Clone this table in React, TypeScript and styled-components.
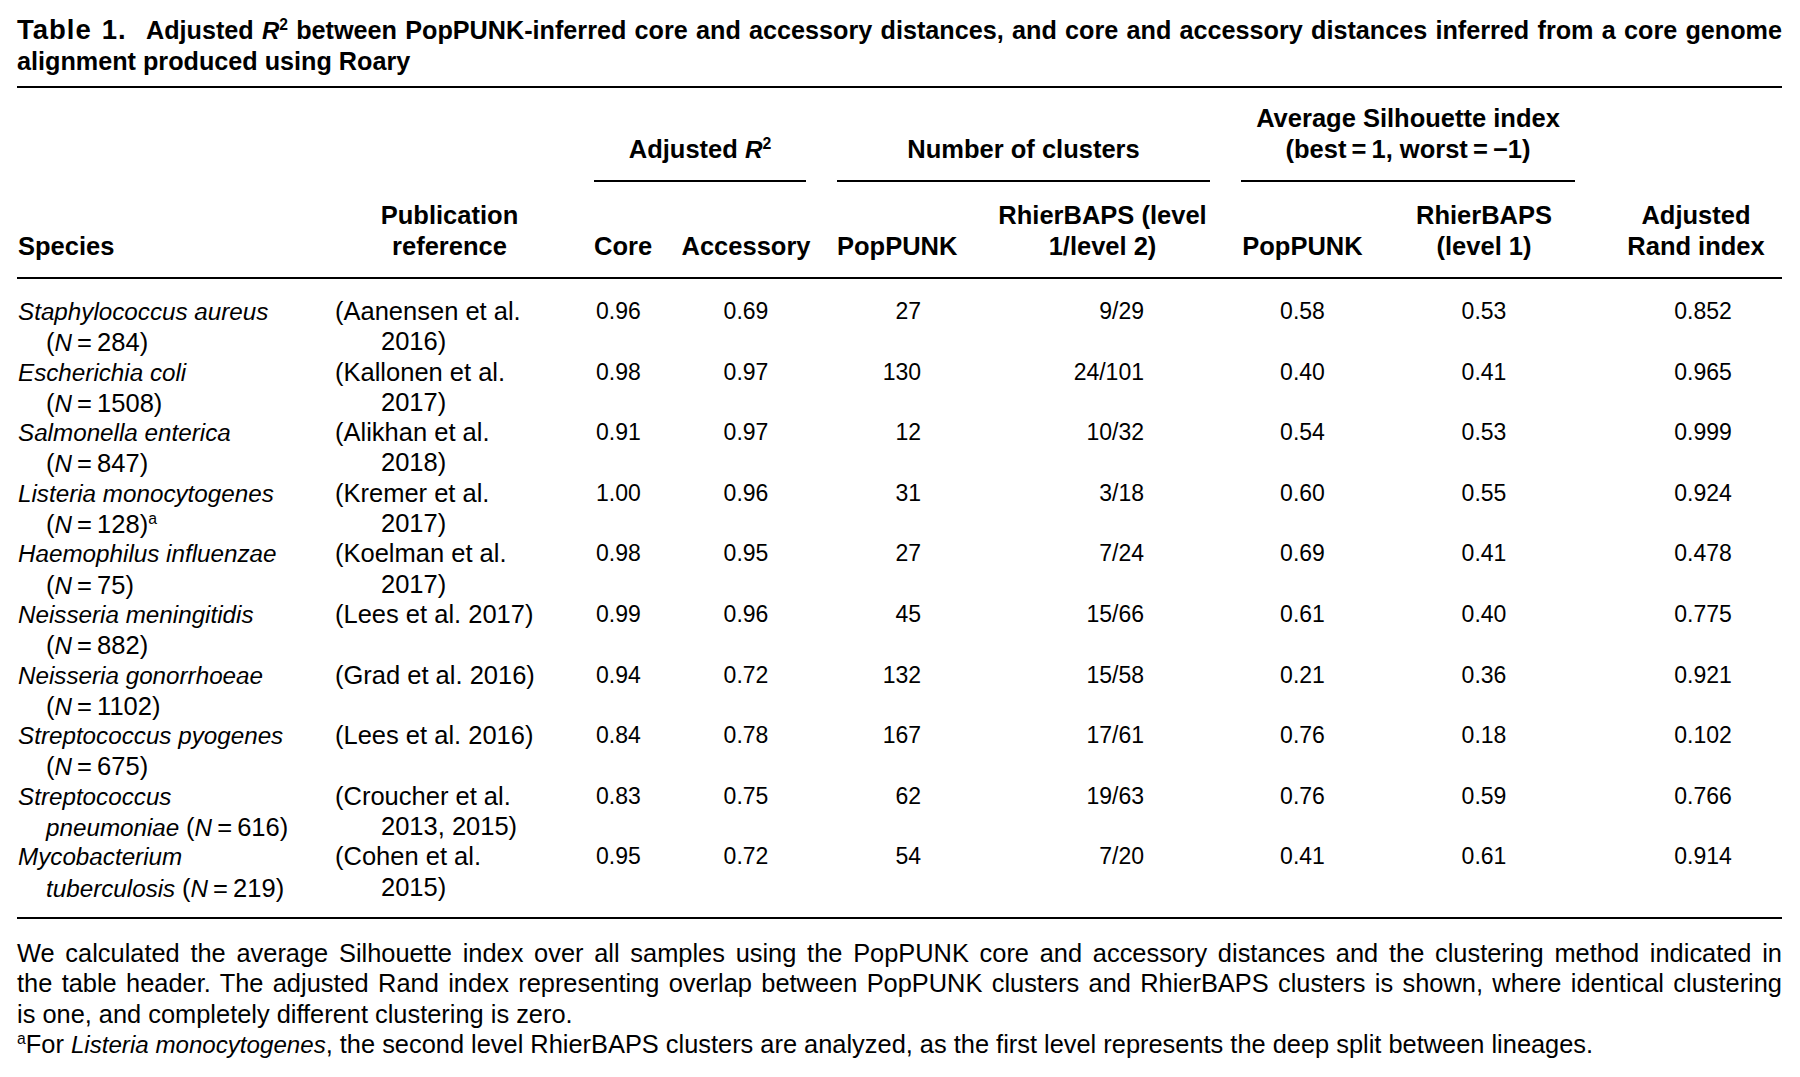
import { FC, ReactNode } from 'react'
import styled, { createGlobalStyle } from 'styled-components'

const FONT = `'Liberation Sans', Arial, sans-serif`
const COLS = '318px 245px 100px 150px 150px 245px 155px 208px 194px'

const GlobalStyle = createGlobalStyle`
  html, body {
    margin: 0;
    padding: 0;
    background: #fff;
  }
  body {
    font-family: ${FONT};
    color: #000;
  }
`

const Page = styled.div`
  width: 1765px;
  padding: 15px 0 0 17px;
`

const Caption = styled.div`
  font-weight: bold;
  font-size: 25.2px;
  line-height: 31px;
  padding-bottom: 9px;
  border-bottom: 2px solid #000;
`

// one forced line of running text, optionally stretched to the full width
const Line = styled.div<{ $justify?: boolean }>`
  white-space: nowrap;
  text-align: ${(p) => (p.$justify ? 'justify' : 'left')};
  text-align-last: ${(p) => (p.$justify ? 'justify' : 'left')};
`

const Label = styled.span`
  font-size: 27.5px;
  line-height: 0;
  letter-spacing: 1px;
  margin-right: 12px;
`

const Head = styled.div`
  display: grid;
  grid-template-columns: ${COLS};
  border-bottom: 2px solid #000;
  font-weight: bold;
  font-size: 25.5px;
  line-height: 31px;
`

type Align = 'left' | 'center' | 'right'

const GroupHead = styled.div<{ $col: string; $ml: number; $mr: number }>`
  grid-row: 1;
  grid-column: ${(p) => p.$col};
  margin: 0 ${(p) => p.$mr}px 0 ${(p) => p.$ml}px;
  padding: 15px 0 15px;
  border-bottom: 2px solid #000;
  text-align: center;
  align-self: end;
  white-space: nowrap;
`

const ColHead = styled.div<{ $col: number; $align: Align; $pl?: number; $pr?: number }>`
  grid-row: 2;
  grid-column: ${(p) => p.$col};
  align-self: end;
  text-align: ${(p) => p.$align};
  padding: 18px ${(p) => p.$pr || 0}px 15px ${(p) => p.$pl || 0}px;
  white-space: nowrap;
`

const Body = styled.div`
  display: grid;
  grid-template-columns: ${COLS};
  padding: 17px 0 15px;
  border-bottom: 2px solid #000;
  font-size: 25.5px;
  line-height: 30.3px;
`

const Cell = styled.div<{ $align: Align; $pl?: number; $pr?: number }>`
  height: 60.6px;
  text-align: ${(p) => p.$align};
  padding: 0 ${(p) => p.$pr || 0}px 0 ${(p) => p.$pl || 0}px;
  white-space: nowrap;
`

const ValueCell = styled(Cell)`
  font-size: 23px;
`

const Indent = styled.div<{ $w: number }>`
  padding-left: ${(p) => p.$w}px;
`

const Notes = styled.div`
  margin-top: 19px;
  font-size: 25.4px;
  line-height: 30.4px;
`

const Sup = styled.sup`
  font-size: 0.62em;
  line-height: 0;
  vertical-align: 0.6em;
`

const I = styled.i`
  font-style: italic;
  font-size: 0.95em;
`

const Eq = '\u2009=\u2009'

const R2: FC = () => (
  <>
    <I>R</I>
    <Sup>2</Sup>
  </>
)

interface Row {
  name: string
  line2?: string
  n: string
  note?: boolean
  ref: string
  ref2?: string
  vals: string[]
}

const ROWS: Row[] = [
  { name: 'Staphylococcus aureus', n: '284', ref: '(Aanensen et al.', ref2: '2016)', vals: ['0.96', '0.69', '27', '9/29', '0.58', '0.53', '0.852'] },
  { name: 'Escherichia coli', n: '1508', ref: '(Kallonen et al.', ref2: '2017)', vals: ['0.98', '0.97', '130', '24/101', '0.40', '0.41', '0.965'] },
  { name: 'Salmonella enterica', n: '847', ref: '(Alikhan et al.', ref2: '2018)', vals: ['0.91', '0.97', '12', '10/32', '0.54', '0.53', '0.999'] },
  { name: 'Listeria monocytogenes', n: '128', note: true, ref: '(Kremer et al.', ref2: '2017)', vals: ['1.00', '0.96', '31', '3/18', '0.60', '0.55', '0.924'] },
  { name: 'Haemophilus influenzae', n: '75', ref: '(Koelman et al.', ref2: '2017)', vals: ['0.98', '0.95', '27', '7/24', '0.69', '0.41', '0.478'] },
  { name: 'Neisseria meningitidis', n: '882', ref: '(Lees et al. 2017)', vals: ['0.99', '0.96', '45', '15/66', '0.61', '0.40', '0.775'] },
  { name: 'Neisseria gonorrhoeae', n: '1102', ref: '(Grad et al. 2016)', vals: ['0.94', '0.72', '132', '15/58', '0.21', '0.36', '0.921'] },
  { name: 'Streptococcus pyogenes', n: '675', ref: '(Lees et al. 2016)', vals: ['0.84', '0.78', '167', '17/61', '0.76', '0.18', '0.102'] },
  { name: 'Streptococcus', line2: 'pneumoniae', n: '616', ref: '(Croucher et al.', ref2: '2013, 2015)', vals: ['0.83', '0.75', '62', '19/63', '0.76', '0.59', '0.766'] },
  { name: 'Mycobacterium', line2: 'tuberculosis', n: '219', ref: '(Cohen et al.', ref2: '2015)', vals: ['0.95', '0.72', '54', '7/20', '0.41', '0.61', '0.914'] },
]

// alignment of the seven value columns
const VALUE_CELLS: { align: Align; pl?: number; pr?: number }[] = [
  { align: 'left', pl: 16 },
  { align: 'center', pr: 18 },
  { align: 'right', pr: 59 },
  { align: 'right', pr: 81 },
  { align: 'center' },
  { align: 'center' },
  { align: 'center', pl: 36 },
]

const Sample: FC<{ n: string; note?: boolean }> = ({ n, note }) => (
  <>
    (<I>N</I>
    {Eq}
    {n})
    {note && <Sup>a</Sup>}
  </>
)

const TableRow: FC<{ row: Row }> = ({ row }) => (
  <>
    <Cell $align='left' $pl={1}>
      <I>{row.name}</I>
      <Indent $w={28}>
        {row.line2 && <I>{row.line2} </I>}
        <Sample n={row.n} note={row.note} />
      </Indent>
    </Cell>
    <Cell $align='left'>
      {row.ref}
      {row.ref2 && <Indent $w={46}>{row.ref2}</Indent>}
    </Cell>
    {row.vals.map((v, i) => (
      <ValueCell key={i} $align={VALUE_CELLS[i].align} $pl={VALUE_CELLS[i].pl} $pr={VALUE_CELLS[i].pr}>
        {v}
      </ValueCell>
    ))}
  </>
)

const Lines: FC<{ children: ReactNode[] }> = ({ children }) => (
  <>
    {children.map((c, i) => (
      <div key={i}>{c}</div>
    ))}
  </>
)

export default function App() {
  return (
    <Page>
      <GlobalStyle />
      <Caption>
        <Line $justify>
          <Label>Table 1.</Label> Adjusted <R2 /> between PopPUNK-inferred core and accessory distances, and
          core and accessory distances inferred from a core genome
        </Line>
        <Line>alignment produced using Roary</Line>
      </Caption>
      <Head>
        <GroupHead $col='3 / 5' $ml={14} $mr={24}>
          Adjusted <R2 />
        </GroupHead>
        <GroupHead $col='5 / 7' $ml={7} $mr={15}>
          Number of clusters
        </GroupHead>
        <GroupHead $col='7 / 9' $ml={16} $mr={13}>
          <Lines>{['Average Silhouette index', `(best${Eq}1, worst${Eq}\u22121)`]}</Lines>
        </GroupHead>
        <ColHead $col={1} $align='left' $pl={1}>
          Species
        </ColHead>
        <ColHead $col={2} $align='center' $pr={16}>
          <Lines>{['Publication', 'reference']}</Lines>
        </ColHead>
        <ColHead $col={3} $align='left' $pl={14}>
          Core
        </ColHead>
        <ColHead $col={4} $align='center' $pr={18}>
          Accessory
        </ColHead>
        <ColHead $col={5} $align='left' $pl={7}>
          PopPUNK
        </ColHead>
        <ColHead $col={6} $align='center'>
          <Lines>{['RhierBAPS (level', '1/level 2)']}</Lines>
        </ColHead>
        <ColHead $col={7} $align='center'>
          PopPUNK
        </ColHead>
        <ColHead $col={8} $align='center'>
          <Lines>{['RhierBAPS', '(level 1)']}</Lines>
        </ColHead>
        <ColHead $col={9} $align='center' $pl={22}>
          <Lines>{['Adjusted', 'Rand index']}</Lines>
        </ColHead>
      </Head>
      <Body>
        {ROWS.map((r) => (
          <TableRow key={r.name + r.n} row={r} />
        ))}
      </Body>
      <Notes>
        <Line $justify>
          We calculated the average Silhouette index over all samples using the PopPUNK core and accessory
          distances and the clustering method indicated in
        </Line>
        <Line $justify>
          the table header. The adjusted Rand index representing overlap between PopPUNK clusters and
          RhierBAPS clusters is shown, where identical clustering
        </Line>
        <Line>is one, and completely different clustering is zero.</Line>
        <Line>
          <Sup>a</Sup>For <I>Listeria monocytogenes</I>, the second level RhierBAPS clusters are analyzed, as the
          first level represents the deep split between lineages.
        </Line>
      </Notes>
    </Page>
  )
}
